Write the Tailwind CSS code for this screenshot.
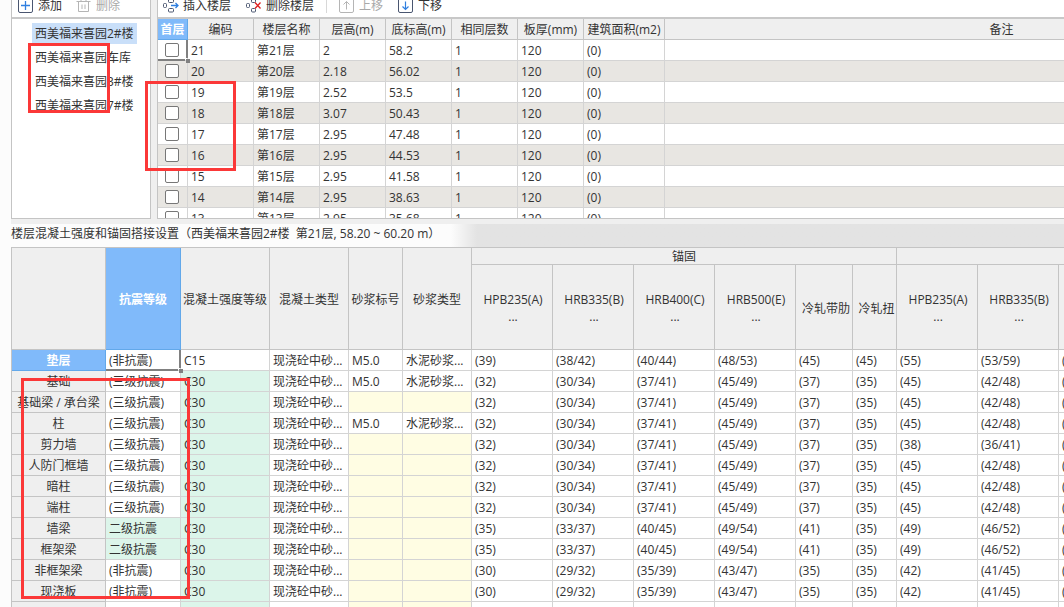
<!DOCTYPE html>
<html lang="zh-CN">
<head>
    <meta charset="utf-8"/>
    <meta content="width=device-width, initial-scale=1.0" name="viewport"/>
    <title>楼层设置</title>
    <script src="https://cdn.jsdelivr.net/npm/@tailwindcss/browser@4"></script>
</head>
<body class="relative flex flex-col h-screen overflow-hidden bg-[#fcfcfc] pl-[11px] font-['Open_Sans','Noto_Sans_CJK_SC',sans-serif] text-[12px] leading-[16px] text-[#333]">
    <!-- buildings and floors -->
    <div class="flex h-[224px] shrink-0 bg-[#efefef] pb-[5px]">
        <aside class="flex w-[140px] shrink-0 flex-col border-x border-b border-[#c4c4c4] bg-white">
            <div class="flex h-[19px] shrink-0 items-start gap-[14px] overflow-hidden border-b-2 border-[#c8c8c8] pl-[6px]">
                <button class="flex h-[11px] items-center gap-[5px]">
                    <svg class="size-[15px]" viewBox="0 0 15 15" fill="none"><rect x=".5" y=".5" width="14" height="14" rx="1.5" stroke="#4a5670"/><path d="M7.500 3v9M3 7.500h9" stroke="#2f7fe0" stroke-width="1.300"/></svg>
                    添加
                </button>
                <button class="flex h-[11px] items-center gap-[5px] text-[#a9a9a9]" disabled>
                    <svg class="size-[15px]" viewBox="0 0 15 15" fill="none" stroke="#b5b5b5"><path d="M0.500 3.500h14M5 3V1h5v2M2.500 4v9.500h10V4M6 6.500v4.500M9 6.500v4.500"/></svg>
                    删除
                </button>
            </div>
            <ul id="buildings" class="pt-[4px] pl-[20px]"></ul>
        </aside>
        <section class="ml-[6px] flex min-w-0 flex-1 flex-col border-b border-l border-[#c4c4c4] bg-white">
            <div class="flex h-[19px] shrink-0 items-start overflow-hidden border-b-2 border-[#c8c8c8] pl-[5px]">
                <button class="flex h-[11px] items-center gap-[4px]">
                    <svg class="size-[16px]" viewBox="0 0 16 16" fill="none" stroke="#4a5670"><rect x=".5" y="5.500" width="3" height="4" rx="1"/><rect x="5.500" y="1" width="5" height="3.500" rx="1"/><rect x="5.500" y="10.500" width="5" height="3.500" rx="1"/><path d="M8 7.500h7M12.500 5 15 7.500 12.500 10" stroke="#2f7fe0" stroke-width="1.300"/></svg>
                    插入楼层
                </button>
                <button class="ml-[15px] flex h-[11px] items-center gap-[4px]">
                    <svg class="size-[16px]" viewBox="0 0 16 16" fill="none" stroke="#4a5670"><rect x=".5" y="5.500" width="3" height="4" rx="1"/><rect x="5.500" y="1" width="4" height="3.500" rx="1"/><rect x="5.500" y="10.500" width="4" height="3.500" rx="1"/><path d="M9 4.500l5.500 6M14.500 4.500l-5.500 6" stroke="#e02020" stroke-width="1.300"/></svg>
                    删除楼层
                </button>
                <span class="mx-[12px] h-[13px] w-px bg-[#d8d8d8]"></span>
                <button class="flex h-[11px] items-center gap-[5px] text-[#a9a9a9]" disabled>
                    <svg class="size-[15px]" viewBox="0 0 15 15" fill="none" stroke="#b5b5b5"><rect x=".5" y=".5" width="14" height="14" rx="1.500"/><path d="M7.500 11.500v-8M4.500 6.500l3-3 3 3"/></svg>
                    上移
                </button>
                <button class="ml-[15px] flex h-[11px] items-center gap-[5px]">
                    <svg class="size-[15px]" viewBox="0 0 15 15" fill="none"><rect x=".5" y=".5" width="14" height="14" rx="1.500" stroke="#4a5670"/><path d="M7.500 3.500v8M4.500 8.500l3 3 3-3" stroke="#2f7fe0" stroke-width="1.200"/></svg>
                    下移
                </button>
            </div>
            <div class="min-h-0 flex-1 overflow-hidden">
                <table class="w-[1181px] table-fixed border-separate border-spacing-0">
                    <colgroup>
                        <col class="w-[30px]"/>
                        <col class="w-[66px]"/>
                        <col class="w-[66px]"/>
                        <col class="w-[66px]"/>
                        <col class="w-[66px]"/>
                        <col class="w-[66px]"/>
                        <col class="w-[66px]"/>
                        <col class="w-[81px]"/>
                        <col/>
                    </colgroup>
                    <thead>
                        <tr class="h-[21px] bg-[#efefef] whitespace-nowrap">
                            <th class="border-r border-b border-[#62a8ea] bg-[#80bafa] p-0 pt-[2px] font-bold text-white">首层</th>
                            <th class="border-r border-b border-[#c4c4c4] p-0 pt-[2px] font-normal">编码</th>
                            <th class="border-r border-b border-[#c4c4c4] p-0 pt-[2px] font-normal">楼层名称</th>
                            <th class="border-r border-b border-[#c4c4c4] p-0 pt-[2px] font-normal">层高(m)</th>
                            <th class="border-r border-b border-[#c4c4c4] p-0 pt-[2px] font-normal">底标高(m)</th>
                            <th class="border-r border-b border-[#c4c4c4] p-0 pt-[2px] font-normal">相同层数</th>
                            <th class="border-r border-b border-[#c4c4c4] p-0 pt-[2px] font-normal">板厚(mm)</th>
                            <th class="border-r border-b border-[#c4c4c4] p-0 pt-[2px] font-normal">建筑面积(m2)</th>
                            <th class="border-r border-b border-[#c4c4c4] p-0 pt-[2px] font-normal">备注</th>
                        </tr>
                    </thead>
                    <tbody id="floors"></tbody>
                </table>
            </div>
        </section>
    </div>

    <h2 class="h-[23px] shrink-0 bg-linear-to-r from-[#fcfcfc] from-[440px] to-[#e3e3e3] to-[466px] leading-[20px] whitespace-pre">楼层混凝土强度和锚固搭接设置（西美福来喜园2#楼  第21层, 58.20 ~ 60.20 m）</h2>

    <!-- concrete grade, anchorage and lap -->
    <div class="min-h-0 flex-1 overflow-hidden border-t border-l border-[#c4c4c4] bg-white">
        <table class="w-[1128px] table-fixed border-separate border-spacing-0">
            <colgroup>
                <col class="w-[94px]"/>
                <col class="w-[75px]"/>
                <col class="w-[89px]"/>
                <col class="w-[79px]"/>
                <col class="w-[54px]"/>
                <col class="w-[69px]"/>
                <col class="w-[81px]"/>
                <col class="w-[81px]"/>
                <col class="w-[81px]"/>
                <col class="w-[81px]"/>
                <col class="w-[57px]"/>
                <col class="w-[44px]"/>
                <col class="w-[81px]"/>
                <col class="w-[81px]"/>
                <col class="w-[81px]"/>
            </colgroup>
            <thead class="bg-[#efefef] whitespace-nowrap">
                <tr class="h-[17px]">
                    <th class="border-r border-b border-[#c4c4c4] p-0" rowspan="2"></th>
                    <th class="border-r border-b border-[#62a8ea] bg-[#80bafa] p-0 pt-[2px] font-bold text-white" rowspan="2">抗震等级</th>
                    <th class="border-r border-b border-[#c4c4c4] p-0 pt-[2px] font-normal" rowspan="2">混凝土强度等级</th>
                    <th class="border-r border-b border-[#c4c4c4] p-0 pt-[2px] font-normal" rowspan="2">混凝土类型</th>
                    <th class="border-r border-b border-[#c4c4c4] p-0 pt-[2px] font-normal" rowspan="2">砂浆标号</th>
                    <th class="border-r border-b border-[#c4c4c4] p-0 pt-[2px] font-normal" rowspan="2">砂浆类型</th>
                    <th class="border-r border-b border-[#c4c4c4] p-0 pt-[2px] font-normal leading-[14px]" colspan="6">锚固</th>
                    <th class="border-r border-b border-[#c4c4c4] p-0 font-normal" colspan="3"></th>
                </tr>
                <tr class="h-[85px] leading-[17px]">
                    <th class="border-r border-b border-[#c4c4c4] p-0 pt-[2px] pl-[2px] font-normal">HPB235(A)<br/>...</th>
                    <th class="border-r border-b border-[#c4c4c4] p-0 pt-[2px] pl-[2px] font-normal">HRB335(B)<br/>...</th>
                    <th class="border-r border-b border-[#c4c4c4] p-0 pt-[2px] pl-[2px] font-normal">HRB400(C)<br/>...</th>
                    <th class="border-r border-b border-[#c4c4c4] p-0 pt-[2px] pl-[2px] font-normal">HRB500(E)<br/>...</th>
                    <th class="border-r border-b border-[#c4c4c4] p-0 pt-[2px] pl-1 font-normal">冷轧带肋</th>
                    <th class="border-r border-b border-[#c4c4c4] p-0 pt-[2px] pl-1 font-normal">冷轧扭</th>
                    <th class="border-r border-b border-[#c4c4c4] p-0 pt-[2px] pl-[2px] font-normal">HPB235(A)<br/>...</th>
                    <th class="border-r border-b border-[#c4c4c4] p-0 pt-[2px] pl-[2px] font-normal">HRB335(B)<br/>...</th>
                    <th class="border-r border-b border-[#c4c4c4] p-0 font-normal"></th>
                </tr>
            </thead>
            <tbody id="grades"></tbody>
        </table>
    </div>

    <!-- red markers over the tables -->
    <div class="pointer-events-none absolute top-[43px] left-[28px] h-[70px] w-[82px] border-3 border-[#fb3838]"></div>
    <div class="pointer-events-none absolute top-[81px] left-[145px] h-[90px] w-[91px] border-3 border-[#fb3838]"></div>
    <div class="pointer-events-none absolute top-[378px] left-[21px] h-[221px] w-[169px] border-3 border-[#fb3838]"></div>

    <script>
        const buildings = ['西美福来喜园2#楼', '西美福来喜园车库', '西美福来喜园3#楼', '西美福来喜园7#楼'];

        const floors = [
            ['21', '2', '58.2'],
            ['20', '2.18', '56.02'],
            ['19', '2.52', '53.5'],
            ['18', '3.07', '50.43'],
            ['17', '2.95', '47.48'],
            ['16', '2.95', '44.53'],
            ['15', '2.95', '41.58'],
            ['14', '2.95', '38.63'],
            ['13', '2.95', '35.68']
        ];

        const sand = '现浇砼中砂...';
        const mortar = '水泥砂浆...';
        const grades = [
            ['垫层', '(非抗震)', 'C15', sand, 'M5.0', mortar, '(39)', '(38/42)', '(40/44)', '(48/53)', '(45)', '(45)', '(55)', '(53/59)', '('],
            ['基础', '(三级抗震)', 'C30', sand, 'M5.0', mortar, '(32)', '(30/34)', '(37/41)', '(45/49)', '(37)', '(35)', '(45)', '(42/48)', '('],
            ['基础梁 / 承台梁', '(三级抗震)', 'C30', sand, '', '', '(32)', '(30/34)', '(37/41)', '(45/49)', '(37)', '(35)', '(45)', '(42/48)', '('],
            ['柱', '(三级抗震)', 'C30', sand, 'M5.0', mortar, '(32)', '(30/34)', '(37/41)', '(45/49)', '(37)', '(35)', '(45)', '(42/48)', '('],
            ['剪力墙', '(三级抗震)', 'C30', sand, '', '', '(32)', '(30/34)', '(37/41)', '(45/49)', '(37)', '(35)', '(38)', '(36/41)', '('],
            ['人防门框墙', '(三级抗震)', 'C30', sand, '', '', '(32)', '(30/34)', '(37/41)', '(45/49)', '(37)', '(35)', '(45)', '(42/48)', '('],
            ['暗柱', '(三级抗震)', 'C30', sand, '', '', '(32)', '(30/34)', '(37/41)', '(45/49)', '(37)', '(35)', '(45)', '(42/48)', '('],
            ['端柱', '(三级抗震)', 'C30', sand, '', '', '(32)', '(30/34)', '(37/41)', '(45/49)', '(37)', '(35)', '(45)', '(42/48)', '('],
            ['墙梁', '二级抗震', 'C30', sand, '', '', '(35)', '(33/37)', '(40/45)', '(49/54)', '(41)', '(35)', '(49)', '(46/52)', '('],
            ['框架梁', '二级抗震', 'C30', sand, '', '', '(35)', '(33/37)', '(40/45)', '(49/54)', '(41)', '(35)', '(49)', '(46/52)', '('],
            ['非框架梁', '(非抗震)', 'C30', sand, '', '', '(30)', '(29/32)', '(35/39)', '(43/47)', '(35)', '(35)', '(42)', '(41/45)', '('],
            ['现浇板', '(非抗震)', 'C30', sand, '', '', '(30)', '(29/32)', '(35/39)', '(43/47)', '(35)', '(35)', '(42)', '(41/45)', '('],
            ['', '', '', '', '', '', '', '', '', '', '', '', '', '', '']
        ];

        // frame of the current cell, with its fill handle
        const cursor = `
            <span class="absolute -bottom-px left-0 right-[2px] h-[2px] bg-[#808080]"></span>
            <span class="absolute top-0 -right-px bottom-[2px] w-[2px] bg-[#808080]"></span>
            <span class="absolute -right-[3px] -bottom-[3px] z-10 size-[4px] bg-[#808080]"></span>`;

        document.getElementById('buildings').innerHTML = buildings.map((name, i) => `
            <li class="flex h-[24px] items-start">
                <span class="h-[21px] px-[3px] leading-[21px] whitespace-nowrap ${i === 0 ? 'bg-[#c9dff9]' : ''}">${name}</span>
            </li>`).join('');

        document.getElementById('floors').innerHTML = floors.map(([no, height, bottom], i) => {
            const values = [no, `第${no}层`, height, bottom, '1', '120', '(0)', ''];
            return `
                <tr class="h-[21px] ${i % 2 ? 'bg-[#e8e6e2]' : 'bg-white'}">
                    <td class="relative border-r border-b border-[#d4d4d4] p-0">
                        <input class="ml-[7px] block size-[14px] appearance-none rounded-[2px] border border-[#777] bg-white" type="checkbox" aria-label="首层 ${no}"/>
                        ${i === 0 ? cursor : ''}
                    </td>
                    ${values.map(v => `<td class="border-r border-b border-[#d4d4d4] p-0 pt-[2px] pl-[3px]">${v}</td>`).join('')}
                </tr>`;
        }).join('');

        function cellColor(col, value) {
            if (col === 1 && value === '二级抗震') return 'bg-[#dcf5ea]';
            if (col === 2 && value !== 'C15') return 'bg-[#dcf5ea]';
            if ((col === 4 || col === 5) && !value) return 'bg-[#fffde3]';
            return 'bg-white';
        }

        document.getElementById('grades').innerHTML = grades.map(([name, ...values], i) => `
            <tr class="h-[21px] whitespace-nowrap">
                <th class="border-r border-b p-0 pt-[2px] ${i === 0 ? 'border-[#62a8ea] bg-[#80bafa] font-bold text-white' : 'border-[#c4c4c4] bg-[#efefef] font-normal'}">${name}</th>
                ${values.map((v, c) => `<td class="relative border-r border-b border-[#d4d4d4] p-0 pt-[2px] pl-[3px] ${cellColor(c + 1, v)}">${v}${i === 0 && c === 0 ? cursor : ''}</td>`).join('')}
            </tr>`).join('');
    </script>
</body>
</html>
